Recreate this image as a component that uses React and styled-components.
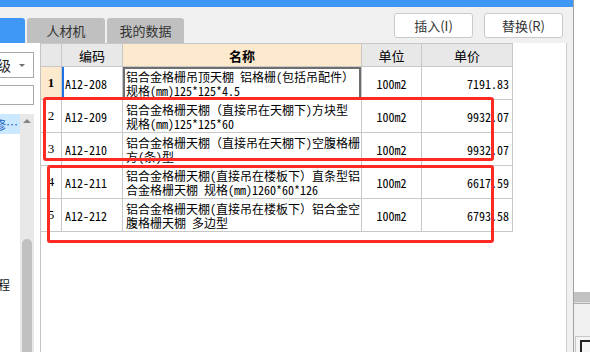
import styled, { createGlobalStyle } from 'styled-components';

const GlobalStyle = createGlobalStyle`
  html, body {
    margin: 0;
    padding: 0;
    background: #f0f0f0;
  }
  body {
    font-family: "Noto Sans CJK SC", "Liberation Sans", sans-serif;
  }
`;

const rows = [
  { no: 1, code: 'A12-208', name: ['铝合金格栅吊顶天棚 铝格栅(包括吊配件）', '规格(mm)125*125*4.5'], unit: '100m2', price: '7191.83' },
  { no: 2, code: 'A12-209', name: ['铝合金格栅天棚（直接吊在天棚下)方块型', '规格(mm)125*125*60'], unit: '100m2', price: '9932.07' },
  { no: 3, code: 'A12-210', name: ['铝合金格栅天棚（直接吊在天棚下)空腹格栅', '方(条)型'], unit: '100m2', price: '9932.07' },
  { no: 4, code: 'A12-211', name: ['铝合金格栅天棚(直接吊在楼板下）直条型铝', '合金格栅天棚 规格(mm)1260*60*126'], unit: '100m2', price: '6617.59' },
  { no: 5, code: 'A12-212', name: ['铝合金格栅天棚(直接吊在楼板下）铝合金空', '腹格栅天棚 多边型'], unit: '100m2', price: '6793.58' },
];

// tree items on the left, scrolled so most of the text is out of view
const treeItems = [
  { text: '装饰装修…', selected: true, pad: 2 },
  null, null, null, null, null, null, null,
  { text: '装饰工程', pad: 10 },
];

export default function App() {
  return (
    <>
      <GlobalStyle />
      <Window>
        <Main>
          <TitleBar />
          <Toolbar>
            <Tabs>
              <Tab $active $w={25} />
              <Tab $w={78}>人材机</Tab>
              <Tab $w={77}>我的数据</Tab>
            </Tabs>
            <Buttons>
              <Button>插入(I)</Button>
              <Button>替换(R)</Button>
            </Buttons>
          </Toolbar>

          <Content>
            <LeftPanel>
              <Combo>
                <ComboText>级</ComboText>
                <ComboArrow />
              </Combo>
              <SearchBox />
              <Tree>
                <TreeList>
                  {treeItems.map((item, i) => (
                    <TreeItem key={i} $selected={item && item.selected} $pad={item ? item.pad : 0}>
                      {item && <span>{item.text}</span>}
                    </TreeItem>
                  ))}
                </TreeList>
                <ScrollBar>
                  <ScrollUp />
                  <ScrollTrack>
                    <ScrollThumb />
                  </ScrollTrack>
                </ScrollBar>
              </Tree>
            </LeftPanel>

            <Grid>
              <Table>
                <HeadCell />
                <HeadCell>编码</HeadCell>
                <HeadCell $accent>名称</HeadCell>
                <HeadCell>单位</HeadCell>
                <HeadCell>单价</HeadCell>

                {rows.map((r) => (
                  <Row key={r.no}>
                    <NoCell $current={r.no === 1}>{r.no}</NoCell>
                    <CodeCell $current={r.no === 1}>{r.code}</CodeCell>
                    <NameCell $focused={r.no === 1}>
                      {r.name.map((line, i) => (
                        <div key={i}>{line}</div>
                      ))}
                    </NameCell>
                    <UnitCell>{r.unit}</UnitCell>
                    <PriceCell>{r.price}</PriceCell>
                  </Row>
                ))}
              </Table>

              <Mark $left={2} $top={54} $w={451} $h={64} />
              <Mark $left={6} $top={122} $w={447} $h={78} />
            </Grid>

            <Gutter />
          </Content>
        </Main>

        <SideStrip>
          <SideBlank />
          <SideBar />
          <SideFill />
          <SideFoot>
            <SideGlyph />
          </SideFoot>
        </SideStrip>
      </Window>
    </>
  );
}

const Window = styled.div`
  width: 590px;
  height: 352px;
  display: flex;
  overflow: hidden;
  background: #f0f0f0;
`;

const Main = styled.div`
  width: 576px;
  display: flex;
  flex-direction: column;
`;

const TitleBar = styled.div`
  height: 7px;
  background: #3f97f5;
`;

const Toolbar = styled.div`
  height: 36px;
  display: flex;
  justify-content: space-between;
`;

const Tabs = styled.div`
  display: flex;
  align-items: flex-end;
  gap: 2px;
`;

const Tab = styled.div`
  width: ${(p) => p.$w}px;
  height: 25px;
  box-sizing: border-box;
  background: ${(p) => (p.$active ? '#3f97f5' : '#c0c0c0')};
  border-radius: ${(p) => (p.$active ? '0 3px 0 0' : '3px 3px 0 0')};
  display: flex;
  align-items: center;
  justify-content: center;
  font-size: 13px;
  color: #333333;
`;

const Buttons = styled.div`
  display: flex;
  gap: 11px;
  padding: 6px 10px 0 0;
`;

const Button = styled.button`
  width: 79px;
  height: 25px;
  box-sizing: border-box;
  padding: 0;
  background: #ffffff;
  border: 1px solid #cacaca;
  border-radius: 3px;
  font-family: "Noto Sans CJK SC", "Liberation Sans", sans-serif;
  font-size: 13px;
  color: #333333;
`;

const Content = styled.div`
  flex: 1;
  display: flex;
  min-height: 0;
`;

const LeftPanel = styled.div`
  width: 41px;
  box-sizing: border-box;
  background: #ffffff;
  border-right: 1px solid #c4c4c4;
  padding-top: 9px;
  display: flex;
  flex-direction: column;
  overflow: hidden;
`;

const Combo = styled.div`
  width: 34px;
  height: 26px;
  box-sizing: border-box;
  border: 1px solid #a9a9a9;
  border-left: none;
  display: flex;
  align-items: center;
  gap: 8px;
  overflow: hidden;
`;

const ComboText = styled.span`
  margin-left: -3px;
  font-size: 14px;
  color: #222222;
  white-space: nowrap;
`;

const ComboArrow = styled.span`
  flex: none;
  width: 0;
  height: 0;
  border-left: 3px solid transparent;
  border-right: 3px solid transparent;
  border-top: 3px solid #707070;
`;

const SearchBox = styled.div`
  width: 34px;
  height: 20px;
  margin-top: 7px;
  box-sizing: border-box;
  border: 1px solid #a9a9a9;
  border-left: none;
`;

const Tree = styled.div`
  flex: 1;
  margin-top: 9px;
  display: flex;
  min-height: 0;
`;

const TreeList = styled.div`
  width: 20px;
  display: flex;
  flex-direction: column;
`;

const TreeItem = styled.div`
  height: 20px;
  flex: none;
  display: flex;
  align-items: center;
  justify-content: flex-end;
  overflow: hidden;
  padding-right: ${(p) => p.$pad}px;
  background: ${(p) => (p.$selected ? '#cce8ff' : 'transparent')};
  color: ${(p) => (p.$selected ? '#1a64c8' : '#111111')};
  font-size: 12px;
  white-space: nowrap;
`;

const ScrollBar = styled.div`
  width: 14px;
  background: #e8e8e8;
  display: flex;
  flex-direction: column;
`;

const ScrollUp = styled.div`
  height: 14px;
  display: flex;
  align-items: center;
  justify-content: center;
  &::before {
    content: '';
    border-left: 4px solid transparent;
    border-right: 4px solid transparent;
    border-bottom: 4px solid #858585;
  }
`;

const ScrollTrack = styled.div`
  flex: 1;
  display: flex;
  justify-content: center;
  padding-top: 111px;
`;

const ScrollThumb = styled.div`
  width: 10px;
  height: 100%;
  background: #c1c1c1;
  border-radius: 5px 5px 0 0;
`;

const Grid = styled.div`
  position: relative;
  width: 526px;
  box-sizing: border-box;
  background: #ffffff;
  border-right: 1px solid #d0d0d0;
`;

const Table = styled.div`
  display: grid;
  grid-template-columns: 21px 61px 239px 60px 91px;
  grid-template-rows: 24px repeat(5, 33px);
  width: 472px;
  font-size: 12px;
  color: #000000;
`;

const Row = styled.div`
  display: contents;
`;

const Cell = styled.div`
  box-sizing: border-box;
  border-right: 1px solid #c8c8c8;
  border-bottom: 1px solid #c8c8c8;
  display: flex;
  align-items: center;
  overflow: hidden;
  white-space: nowrap;
  font-family: "Noto Sans Mono CJK SC", "Noto Sans CJK SC", monospace;
`;

const HeadCell = styled(Cell)`
  justify-content: center;
  background: ${(p) => (p.$accent ? '#fde9cd' : '#e8e8e8')};
  font-family: "Noto Sans CJK SC", sans-serif;
  font-size: 13px;
  font-weight: ${(p) => (p.$accent ? 700 : 400)};
  border-top: 1px solid #c8c8c8;
`;

const NoCell = styled(Cell)`
  justify-content: center;
  background: ${(p) => (p.$current ? '#fde9cd' : '#ffffff')};
  font-family: "Liberation Serif", serif;
  font-size: 13px;
  font-weight: ${(p) => (p.$current ? 700 : 400)};
`;

const CodeCell = styled(Cell)`
  padding-left: 3px;
  box-shadow: ${(p) => (p.$current ? 'inset 2px 0 0 #1f6fe5' : 'none')};
`;

const NameCell = styled(Cell)`
  flex-direction: column;
  align-items: flex-start;
  justify-content: flex-start;
  padding: 3px 0 0 3px;
  line-height: 14px;
  box-shadow: ${(p) => (p.$focused ? 'inset 0 0 0 2px #6e6e6e' : 'none')};
`;

const UnitCell = styled(Cell)`
  justify-content: center;
`;

const PriceCell = styled(Cell)`
  justify-content: flex-end;
  padding-right: 3px;
`;

const Mark = styled.div`
  position: absolute;
  left: ${(p) => p.$left}px;
  top: ${(p) => p.$top}px;
  width: ${(p) => p.$w}px;
  height: ${(p) => p.$h}px;
  box-sizing: border-box;
  border: 3px solid #ff2a24;
  border-radius: 3px;
  pointer-events: none;
`;

const Gutter = styled.div`
  flex: 1;
  background: #f0f0f0;
`;

const SideStrip = styled.div`
  flex: 1;
  border-left: 1px solid #a0a0a0;
  display: flex;
  flex-direction: column;
`;

const SideBlank = styled.div`
  height: 297px;
  background: #ffffff;
`;

const SideBar = styled.div`
  height: 10px;
  background: #c2c2c2;
  border-bottom: 1px solid #e0e0e0;
`;

const SideFill = styled.div`
  height: 33px;
  background: #f0f0f0;
  border-top: 1px solid #b0b0b0;
`;

const SideFoot = styled.div`
  flex: 1;
  border-top: 1px solid #c8c8c8;
  border-left: 1px solid #c8c8c8;
  margin-left: 1px;
  padding: 3px 0 0 4px;
  background: #f4f4f4;
`;

const SideGlyph = styled.div`
  width: 8px;
  height: 10px;
  border: 2px solid #222222;
  border-right: none;
  border-bottom: none;
`;
